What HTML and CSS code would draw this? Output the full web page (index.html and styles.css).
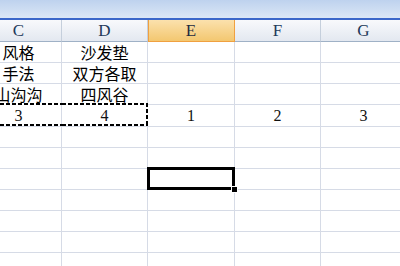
FILE: index.html
```html
<!DOCTYPE html>
<html lang="zh">
<head>
  <meta charset="UTF-8" />
  <title>Sheet</title>
  <link rel="stylesheet" href="styles.css">
</head>
<body>
  <div class="ribbon"></div>
  <div class="ribbon-line"></div>
  <div class="sheet">
    <div class="hd">C</div><div class="hd">D</div><div class="hd active">E</div><div class="hd">F</div><div class="hd">G</div>

    <div class="cell cn">风格</div><div class="cell cn">沙发垫</div><div class="cell"></div><div class="cell"></div><div class="cell"></div>
    <div class="cell cn">手法</div><div class="cell cn">双方各取</div><div class="cell"></div><div class="cell"></div><div class="cell"></div>
    <div class="cell cn">山沟沟</div><div class="cell cn">四风谷</div><div class="cell"></div><div class="cell"></div><div class="cell"></div>
    <div class="cell num tall ant">3</div><div class="cell num tall ant ant-end">4</div><div class="cell num tall">1</div><div class="cell num tall">2</div><div class="cell num tall">3</div>
    <div class="cell"></div><div class="cell"></div><div class="cell"></div><div class="cell"></div><div class="cell"></div>
    <div class="cell"></div><div class="cell"></div><div class="cell"></div><div class="cell"></div><div class="cell"></div>
    <div class="cell"></div><div class="cell"></div><div class="cell selected"><span class="handle"></span></div><div class="cell"></div><div class="cell"></div>
    <div class="cell"></div><div class="cell"></div><div class="cell"></div><div class="cell"></div><div class="cell"></div>
    <div class="cell"></div><div class="cell"></div><div class="cell"></div><div class="cell"></div><div class="cell"></div>
    <div class="cell"></div><div class="cell"></div><div class="cell"></div><div class="cell"></div><div class="cell"></div>
    <div class="cell"></div><div class="cell"></div><div class="cell"></div><div class="cell"></div><div class="cell"></div>
  </div>
</body>
</html>
```

FILE: styles.css
```css
body {
  margin: 0;
  background: #fff;
  overflow: hidden;
  font-family: 'Liberation Serif', 'Noto Sans CJK SC', serif;
}
.ribbon {
  height: 18px;
  background: linear-gradient(#bed2ee, #dbe7f6);
}
.ribbon-line {
  height: 2px;
  background: #3b67c9;
}
.sheet {
  display: grid;
  grid-template-columns: 86px 86px 87px 86px 86px;
  margin-left: -24px;
  width: 431px;
}
.hd {
  box-sizing: border-box;
  height: 22px;
  line-height: 17px;
  border-right: 1px solid #c5cfdc;
  border-bottom: 1px solid #9fb1c6;
  background: linear-gradient(#f8f9fc, #e3e8f0);
  color: #22395a;
  font-size: 17px;
  display: flex;
  align-items: center;
  justify-content: center;
}
.hd.active {
  background: linear-gradient(#fbe1ad, #f3c770);
  border-right: 1px solid #f0a040;
  border-bottom: 1px solid #f0a040;
  box-shadow: inset 1px 0 0 #f0a040;
  color: #1c2a40;
}
.cell {
  box-sizing: border-box;
  height: 21px;
  line-height: 16px;
  border-right: 1px solid #d6dbe6;
  border-bottom: 1px solid #d6dbe6;
  display: flex;
  align-items: center;
  justify-content: center;
  position: relative;
  color: #000;
}
.cn {
  font-family: 'Noto Sans CJK SC', sans-serif;
  font-size: 16px;
}
.num {
  font-size: 16px;
  color: #111;
}
.tall {
  height: 22px;
}
.ant::after {
  content: "";
  position: absolute;
  left: 0;
  right: -1px;
  top: -2px;
  bottom: 0;
  background:
    repeating-linear-gradient(90deg, #000 0 4px, #fff 4px 6px) top / 100% 2px no-repeat,
    repeating-linear-gradient(90deg, #000 0 4px, #fff 4px 6px) bottom / 100% 2px no-repeat;
}
.ant-end::after {
  background:
    repeating-linear-gradient(90deg, #000 0 4px, #fff 4px 6px) top / 100% 2px no-repeat,
    repeating-linear-gradient(90deg, #000 0 4px, #fff 4px 6px) bottom / 100% 2px no-repeat,
    repeating-linear-gradient(180deg, #000 0 4px, #fff 4px 6px) right / 2px 100% no-repeat;
}
.selected::after {
  content: "";
  position: absolute;
  left: -1px;
  right: -1px;
  top: -2px;
  bottom: -1px;
  border: 3px solid #000;
}
.handle {
  position: absolute;
  right: -3px;
  bottom: -3px;
  width: 5px;
  height: 5px;
  background: #000;
  box-shadow: 0 0 0 1px #fff;
  z-index: 2;
}
```
